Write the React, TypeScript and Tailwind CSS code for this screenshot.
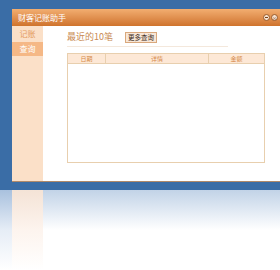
const font = "font-['Noto_Sans_CJK_SC','Noto_Sans',sans-serif]";

function TitleBar() {
  return (
    <div className="flex h-[17px] items-center justify-between bg-gradient-to-b from-[#f2ae70] to-[#cf732c] pl-[6px] pr-[2px]">
      <span className="text-[8px] leading-none text-white">财客记账助手</span>
      <div className="flex items-center gap-[1px]">
        <span className="flex h-[7px] w-[7px] items-center justify-center rounded-full border border-[#9a5a28] bg-[#f6e2cf]">
          <span className="h-[1px] w-[3px] bg-[#7a4218]" />
        </span>
        <span className="flex h-[7px] w-[7px] items-center justify-center rounded-full border border-[#9a5a28] bg-[#f6e2cf] text-[5px] leading-none text-[#7a4218]">
          ×
        </span>
      </div>
    </div>
  );
}

function Sidebar() {
  return (
    <div className="flex w-[31px] flex-col bg-[#fbe0c8]">
      <div className="flex h-[16px] items-center justify-center text-[8px] leading-none text-[#e39a5c]">记账</div>
      <div className="flex h-[14px] items-center justify-center bg-[#f5b886] text-[8px] leading-none text-white">查询</div>
    </div>
  );
}

function RecentTable() {
  return (
    <div className="ml-[24px] mt-[6px] flex h-[110px] w-[198px] flex-col border border-[#e8cfae]">
      <div className="grid h-[10px] grid-cols-[38px_103px_1fr] border-b border-[#e8cfae] bg-[#fde8d6] text-[6px] leading-none text-[#d68a4a]">
        <div className="flex items-center justify-center border-r border-[#e8cfae]">日期</div>
        <div className="flex items-center justify-center border-r border-[#e8cfae]">详情</div>
        <div className="flex items-center justify-center">金额</div>
      </div>
      <div className="flex-1 bg-white" />
    </div>
  );
}

function Content() {
  return (
    <div className="flex flex-1 flex-col bg-white pt-[5px]">
      <div className="ml-[24px] flex w-[161px] items-center gap-[12px] border-b border-[#f4e8dc] pb-[3px]">
        <span className="text-[9px] leading-[12px] text-[#c98a52]">最近的10笔</span>
        <span className="flex h-[11px] items-center border border-[#d9a87c] bg-[#f8e6d6] px-[2px] text-[6.5px] leading-none text-[#3a2a1a]">
          更多查询
        </span>
      </div>
      <RecentTable />
    </div>
  );
}

export default function App() {
  return (
    <div className={`${font} flex h-[270px] w-[280px] flex-col overflow-hidden bg-white`}>
      <div className="h-[190px] bg-[#3a6da6] pl-[12px] pt-[9px]">
        <div className="flex h-[173px] w-[268px] flex-col border-b border-[#b08a6a]">
          <TitleBar />
          <div className="flex flex-1">
            <Sidebar />
            <Content />
          </div>
        </div>
      </div>
      <div className="flex h-[80px] bg-gradient-to-b from-[#c2d3e7] via-white to-white">
        <div className="w-[12px] bg-gradient-to-b from-[#a9c1de] via-[#e6edf6] to-white" />
        <div className="w-[31px] bg-gradient-to-b from-[#f4e3d6] via-[#fdf4ee] to-white" />
      </div>
    </div>
  );
}
